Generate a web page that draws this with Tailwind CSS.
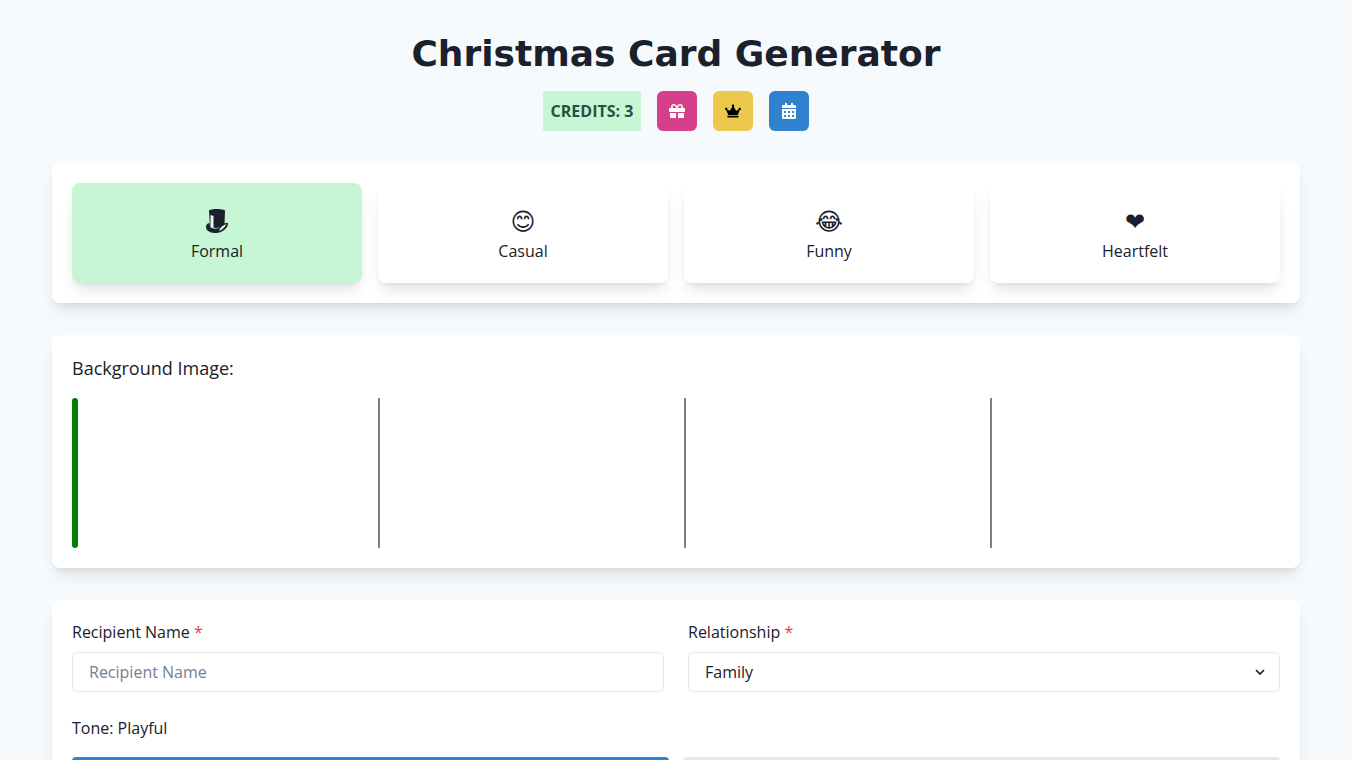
<!DOCTYPE html>
<html lang="en">
<head>
  <meta charset="UTF-8">
  <meta name="viewport" content="width=device-width, initial-scale=1.0">
  <title>Christmas Card Generator</title>
  <script src="https://cdn.jsdelivr.net/npm/@tailwindcss/browser@4"></script>
</head>
<body class="bg-[#f7fafc] text-[#1a202c] font-['Open_Sans','Noto_Sans',sans-serif] antialiased [text-rendering:optimizeLegibility] h-screen overflow-hidden">
  <div class="px-[52px] pt-5">
    <h1 class="text-center text-[36px] leading-[68px] h-[62px] font-bold font-['DejaVu_Sans',sans-serif]">Christmas Card Generator</h1>

    <!-- credits and shortcut buttons -->
    <div class="flex justify-center items-center gap-4 mt-[9px]">
      <span class="h-10 px-2 flex items-center bg-[#c6f6d5] text-[#22543d] font-bold text-base">CREDITS: 3</span>
      <button class="w-10 h-10 rounded-md bg-[#d53f8c] flex items-center justify-center">
        <svg class="w-4 h-4" viewBox="0 0 512 512" fill="#fff"><path d="M32 448c0 17.7 14.3 32 32 32h160V320H32v128zm256 32h160c17.7 0 32-14.3 32-32V320H288v160zm192-320h-42.1c6.2-12.1 10.1-25.5 10.1-40 0-48.5-39.5-88-88-88-41.6 0-68.5 21.3-103 68.3-34.5-47-61.4-68.3-103-68.3-48.5 0-88 39.5-88 88 0 14.5 3.8 27.9 10.1 40H32c-17.7 0-32 14.3-32 32v80c0 8.8 7.2 16 16 16h480c8.8 0 16-7.2 16-16v-80c0-17.7-14.3-32-32-32zm-326.1 0c-22.1 0-40-17.9-40-40s17.9-40 40-40c19.9 0 34.6 3.3 86.1 80h-86.1zm206.1 0h-86.1c51.4-76.5 65.7-80 86.1-80 22.1 0 40 17.9 40 40s-17.9 40-40 40z"/></svg>
      </button>
      <button class="w-10 h-10 rounded-md bg-[#ecc94b] flex items-center justify-center">
        <svg class="w-4 h-4" viewBox="0 0 640 512" fill="#000"><path d="M528 448H112c-8.8 0-16 7.2-16 16v32c0 8.8 7.2 16 16 16h416c8.8 0 16-7.2 16-16v-32c0-8.8-7.2-16-16-16zm64-320c-26.5 0-48 21.5-48 48 0 7.1 1.6 13.7 4.4 19.8L476 239.2c-15.4 9.2-35.3 4-44.2-11.6L350.3 85C361 76.2 368 63 368 48c0-26.5-21.5-48-48-48s-48 21.5-48 48c0 15 7 28.2 17.7 37l-81.5 142.6c-8.9 15.6-28.9 20.8-44.2 11.6l-72.3-43.4c2.7-6 4.4-12.7 4.4-19.8 0-26.5-21.5-48-48-48S0 149.5 0 176s21.5 48 48 48c2.6 0 5.2-.4 7.7-.8L128 416h384l72.3-192.8c2.5.4 5.1.8 7.7.8 26.5 0 48-21.5 48-48s-21.5-48-48-48z"/></svg>
      </button>
      <button class="w-10 h-10 rounded-md bg-[#3182ce] flex items-center justify-center">
        <svg class="w-4 h-4" viewBox="0 0 448 512" fill="#fff"><path d="M0 464c0 26.5 21.5 48 48 48h352c26.5 0 48-21.5 48-48V192H0v272zm320-196c0-6.6 5.4-12 12-12h40c6.6 0 12 5.4 12 12v40c0 6.6-5.4 12-12 12h-40c-6.6 0-12-5.4-12-12v-40zm0 128c0-6.6 5.4-12 12-12h40c6.6 0 12 5.4 12 12v40c0 6.6-5.4 12-12 12h-40c-6.6 0-12-5.4-12-12v-40zM192 268c0-6.6 5.4-12 12-12h40c6.6 0 12 5.4 12 12v40c0 6.6-5.4 12-12 12h-40c-6.6 0-12-5.4-12-12v-40zm0 128c0-6.6 5.4-12 12-12h40c6.6 0 12 5.4 12 12v40c0 6.6-5.4 12-12 12h-40c-6.6 0-12-5.4-12-12v-40zM64 268c0-6.6 5.4-12 12-12h40c6.6 0 12 5.4 12 12v40c0 6.6-5.4 12-12 12H76c-6.6 0-12-5.4-12-12v-40zm0 128c0-6.6 5.4-12 12-12h40c6.6 0 12 5.4 12 12v40c0 6.6-5.4 12-12 12H76c-6.6 0-12-5.4-12-12v-40zM400 64h-48V16c0-8.8-7.2-16-16-16h-32c-8.8 0-16 7.2-16 16v48H160V16c0-8.8-7.2-16-16-16h-32c-8.8 0-16 7.2-16 16v48H48C21.5 64 0 85.5 0 112v48h448v-48c0-26.5-21.5-48-48-48z"/></svg>
      </button>
    </div>

    <!-- style picker -->
    <div class="mt-8 bg-white rounded-lg shadow-lg p-5 grid grid-cols-4 gap-4">
      <div class="h-[100px] rounded-lg bg-[#c6f6d5] shadow-lg flex flex-col items-center justify-center">
        <span class="h-9 pt-[5px]">
          <svg class="w-6 h-[26px]" viewBox="0 0 24 26" fill="#1a202c">
            <path d="M4 2.5C6 .5 17 .5 20 2.5L19.5 17C17 19 14 20 11 20L5 19Z"/>
            <path d="M1 19C1 16 3 15 4.5 15L5 19C7 21 11 21 14 20L17 17C20 15 23 14 23 15.5C23 20 17 25 11 25C6 25 1 23 1 19Z"/>
            <path fill="#e6fbec" d="M5.5 7L8.5 8L8.5 20L5.5 19Z"/>
            <path fill="#e6fbec" d="M14 23C17 22 20 19 21.5 16C18.5 17 15 19.5 14 23Z"/>
          </svg>
        </span>
        <span class="text-base leading-6">Formal</span>
      </div>
      <div class="h-[100px] rounded-lg bg-white shadow-lg flex flex-col items-center justify-center">
        <span class="text-2xl leading-[38px] h-9 font-['DejaVu_Sans','Noto_Sans',sans-serif]">😊</span>
        <span class="text-base leading-6">Casual</span>
      </div>
      <div class="h-[100px] rounded-lg bg-white shadow-lg flex flex-col items-center justify-center">
        <span class="text-2xl leading-[38px] h-9 font-['DejaVu_Sans','Noto_Sans',sans-serif]">😂</span>
        <span class="text-base leading-6">Funny</span>
      </div>
      <div class="h-[100px] rounded-lg bg-white shadow-lg flex flex-col items-center justify-center">
        <span class="text-2xl leading-[38px] h-9 font-['DejaVu_Sans','Noto_Sans',sans-serif]">❤</span>
        <span class="text-base leading-6">Heartfelt</span>
      </div>
    </div>

    <!-- background images, thumbnails failed to load so only borders remain -->
    <div class="mt-8 bg-white rounded-lg shadow-lg p-5">
      <p class="text-lg leading-[27px] mb-4">Background Image:</p>
      <div class="grid grid-cols-4 gap-4 h-[150px]">
        <div class="w-[6px] h-[150px] border-[3px] border-[#008000] rounded-[4px]"></div>
        <div class="w-[2px] h-[150px] border border-[#808080]"></div>
        <div class="w-[2px] h-[150px] border border-[#808080]"></div>
        <div class="w-[2px] h-[150px] border border-[#808080]"></div>
      </div>
    </div>

    <!-- form -->
    <div class="mt-8 bg-white rounded-lg shadow-lg p-5">
      <div class="grid grid-cols-2 gap-6">
        <div>
          <label class="block text-base leading-6 mb-2">Recipient Name <span class="text-[#e53e3e]">*</span></label>
          <input class="w-full h-10 px-4 border border-[#e2e8f0] rounded-md text-base placeholder:text-[#718096]" placeholder="Recipient Name">
        </div>
        <div>
          <label class="block text-base leading-6 mb-2">Relationship <span class="text-[#e53e3e]">*</span></label>
          <div class="relative">
            <select class="w-full h-10 px-4 border border-[#e2e8f0] rounded-md text-base appearance-none bg-white">
              <option>Family</option>
            </select>
            <svg class="absolute right-[14px] top-[14px] w-3 h-3" viewBox="0 0 24 24" fill="none" stroke="#1a202c" stroke-width="3.5"><path d="M4 8l8 8 8-8"/></svg>
          </div>
        </div>
      </div>
      <p class="mt-6 text-base leading-6">Tone: Playful</p>
      <div class="mt-[17px] flex gap-[14px]">
        <div class="flex-1 h-10 bg-[#3182ce] rounded-t-sm"></div>
        <div class="flex-1 h-10 bg-[#e2e8f0] rounded-t-sm"></div>
      </div>
    </div>
  </div>
</body>
</html>
